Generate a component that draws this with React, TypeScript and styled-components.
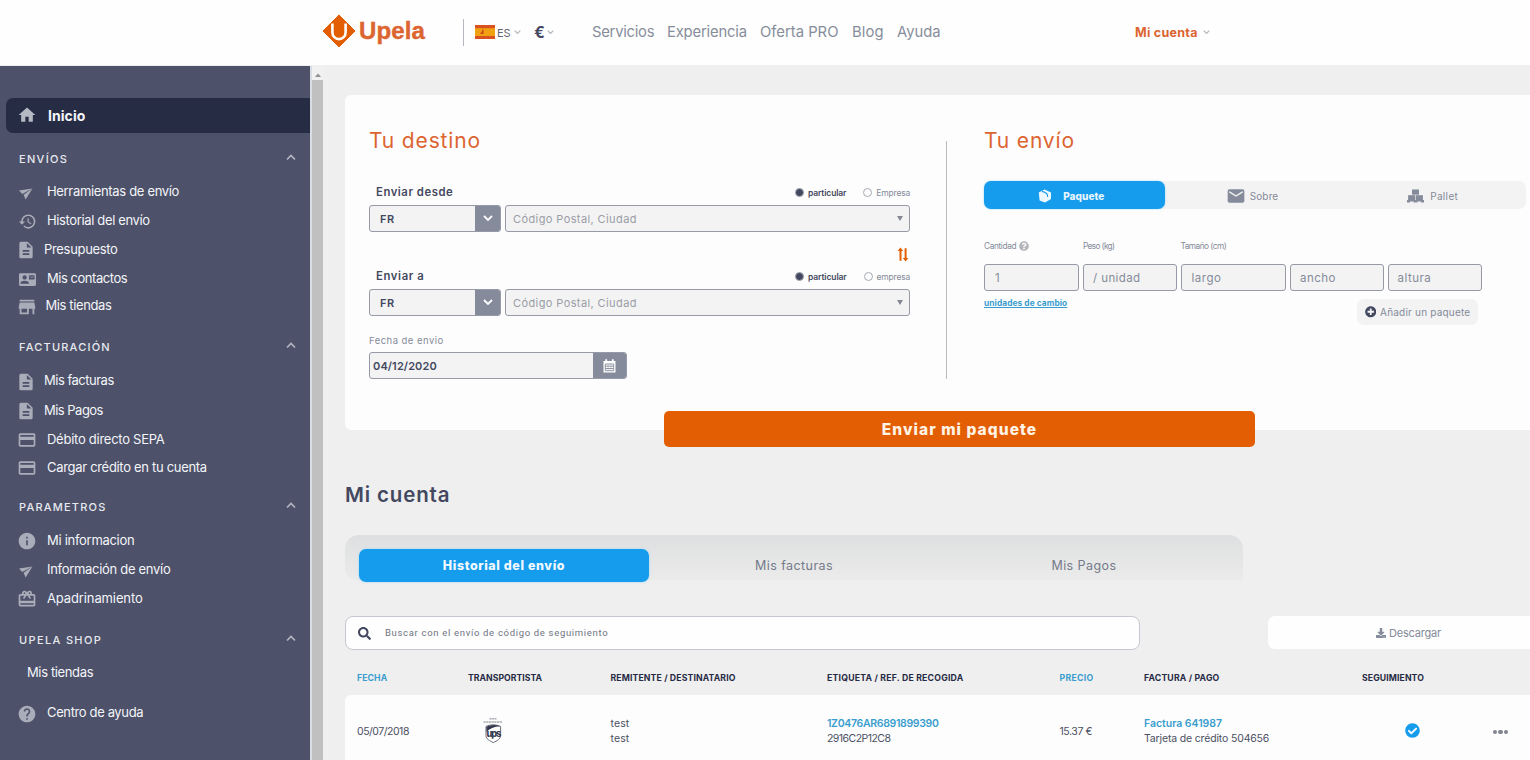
import React from 'react';
import styled, { createGlobalStyle, css } from 'styled-components';
import {
  MdHome, MdHistory, MdDescription, MdContactMail, MdStore, MdCreditCard,
  MdInfo, MdCardGiftcard, MdHelp, MdEmail,
} from 'react-icons/md';
import { FaSearch, FaDownload, FaCheckCircle, FaPlusCircle, FaQuestionCircle } from 'react-icons/fa';

const c = {
  side: '#4d5169',
  active: '#272c45',
  bg: '#efefef',
  orange: '#e35e02',
  title: '#dc6430',
  blue: '#159cec',
  link: '#3a9dce',
  navy: '#434860',
  gray: '#858b9a',
  field: '#f3f3f3',
};

const GlobalStyle = createGlobalStyle`
  * { box-sizing: border-box; }
  body {
    margin: 0;
    background: ${c.bg};
    font-family: Inter, "Open Sans", sans-serif;
    overflow: hidden;
  }
`;

type TextProps = { $s: number; $ls?: number; $w?: number; $c?: string };
const Text = styled.span<TextProps>`
  font-size: ${p => p.$s}px;
  letter-spacing: ${p => p.$ls ?? 0}px;
  font-weight: ${p => p.$w ?? 400};
  color: ${p => p.$c ?? 'inherit'};
  white-space: nowrap;
`;

const Page = styled.div`
  width: 1530px;
  height: 760px;
  overflow: hidden;
  display: flex;
  flex-direction: column;
`;

/* ---------- header ---------- */
const Header = styled.header`
  height: 66px;
  flex: none;
  background: #fefefe;
  border-bottom: 1px solid #f0f0f0;
  display: flex;
  align-items: center;
  padding-left: 322px;
`;
const Logo = styled.div`
  display: flex;
  align-items: center;
  width: 141px;
  height: 100%;
  padding-bottom: 3px;
`;
const LogoText = styled.span`
  font: bold 24px/30px "Liberation Sans", Arial, sans-serif;
  letter-spacing: 0.1px;
  color: ${c.title};
  -webkit-text-stroke: 0.4px ${c.title};
  margin-left: 3px;
`;
const Locale = styled.div`
  display: flex;
  align-items: center;
  height: 27px;
  width: 129px;
  margin-top: -1px;
  padding-left: 11px;
  border-left: 1px solid #b4b7bf;
  color: #5f6474;
`;
const Language = styled.div`
  display: flex;
  align-items: center;
  gap: 4px;
  margin-left: 2px;
  padding-top: 1px;
`;
const Currency = styled.div`
  display: flex;
  align-items: center;
  gap: 2px;
  margin-left: 13px;
`;
const Nav = styled.nav`
  display: flex;
  height: 20px;
  margin-top: -3px;
  align-items: center;
  color: #878d9b;
`;
const NavItem = styled.div<{ $w: number }>`
  width: ${p => p.$w}px;
`;
const Account = styled.div`
  display: flex;
  align-items: center;
  gap: 5px;
`;

const Chevron = ({ w = 7, color = '#b3b6bf', sw = 1.2, up = false }: { w?: number; color?: string; sw?: number; up?: boolean }) => (
  <svg width={w} height={w * 0.65} viewBox="0 0 10 6.5" fill="none" stroke={color} strokeWidth={(sw * 10) / w}>
    <path d={up ? 'M1 5.5 L5 1.5 L9 5.5' : 'M1 1 L5 5 L9 1'} />
  </svg>
);

const LogoMark = () => (
  <svg width="34" height="34" viewBox="0 0 34 34">
    <path d="M17 1 L33 17 L17 33 L1 17Z" fill={c.orange} stroke={c.orange} strokeLinejoin="round" />
    <path d="M10.4 9.5 V18.5 A6.6 6.6 0 0 0 23.6 18.5 V9.5" fill="none" stroke="#fff" strokeWidth="2.6" />
    <path d="M17 0.5 L23.5 8.5 H19.8 V19.5 A2.8 2.8 0 0 1 14.2 19.5 V8.5 H10.5Z" fill={c.orange} />
  </svg>
);

const Flag = () => (
  <svg width="20" height="14" viewBox="0 0 20 14">
    <rect width="20" height="14" fill="#d9511e" />
    <rect y="3.2" width="20" height="7.8" fill="#f0a010" />
    <path d="M6.8 5 L8.6 4.6 V9 H5.4 V8 L7 6.8Z" fill="#cf4a1c" />
  </svg>
);

/* ---------- sidebar ---------- */
const Body = styled.div`
  display: flex;
  flex: 1;
  min-height: 0;
`;
const Sidebar = styled.aside`
  width: 310px;
  flex: none;
  background: ${c.side};
  color: #f3f5f9;
  padding-top: 32px;
`;
const Home = styled.div`
  height: 35px;
  margin-left: 6px;
  padding: 0 0 1px 11px;
  border-radius: 7px 0 0 7px;
  background: ${c.active};
  display: flex;
  align-items: center;
  svg { color: #b4b9c4; margin-right: 11px; }
`;
const GroupTitle = styled.div<{ $mt: number; $mb: number }>`
  display: flex;
  align-items: center;
  justify-content: space-between;
  height: 20px;
  margin: ${p => p.$mt}px 14px ${p => p.$mb}px 19px;
  color: #e7e9ef;
  svg { margin-top: -3px; }
`;
const Item = styled.div<{ $h?: number; $x?: number }>`
  height: ${p => p.$h ?? 29}px;
  display: flex;
  align-items: center;
  padding-left: ${p => p.$x ?? 17}px;
`;
const IconBox = styled.span<{ $w: number; $y?: number }>`
  width: ${p => p.$w}px;
  height: 22px;
  display: flex;
  align-items: center;
  padding-top: ${p => p.$y ?? 4}px;
  color: #a9adba;
  flex: none;
`;

const SendIcon = () => (
  <svg width="17" height="14" viewBox="0 0 17 14" fill="currentColor">
    <path d="M2 3.4 L15.5 1.6 L5.2 6.9Z" />
    <path d="M15.5 1.6 L8.6 12.6 L6.6 7.8Z" />
  </svg>
);

type Entry = { t: string; ls: number; icon: React.ReactNode; w?: number; h?: number; x?: number; y?: number };
const doc = <MdDescription size={20} />;
const card = <MdCreditCard size={20} />;
const groups: { title: string; ls: number; mt: number; mb: number; items: Entry[] }[] = [
  {
    title: 'ENVÍOS', ls: 1.3, mt: 16, mb: 7, items: [
      { t: 'Herramientas de envío', ls: -0.33, icon: <SendIcon />, y: 6 },
      { t: 'Historial del envío', ls: -0.36, icon: <MdHistory size={19} />, w: 29, x: 18 },
      { t: 'Presupuesto', ls: -0.32, icon: doc, w: 28, x: 16, y: 3 },
      { t: 'Mis contactos', ls: -0.46, icon: <MdContactMail size={17} />, w: 28, x: 19 },
      { t: 'Mis tiendas', ls: -0.39, icon: <MdStore size={22} />, x: 15.5, h: 26 },
    ],
  },
  {
    title: 'FACTURACIÓN', ls: 1.2, mt: 19, mb: 8, items: [
      { t: 'Mis facturas', ls: -0.5, icon: doc, w: 28, x: 16, y: 3, h: 30 },
      { t: 'Mis Pagos', ls: -0.52, icon: doc, w: 28, x: 16, y: 3 },
      { t: 'Débito directo SEPA', ls: -0.26, icon: card, y: 3 },
      { t: 'Cargar crédito en tu cuenta', ls: -0.31, icon: card, y: 3, h: 27 },
    ],
  },
  {
    title: 'PARAMETROS', ls: 1.2, mt: 17, mb: 8, items: [
      { t: 'Mi informacion', ls: -0.29, icon: <MdInfo size={20} />, y: 3 },
      { t: 'Información de envío', ls: -0.3, icon: <SendIcon />, y: 6 },
      { t: 'Apadrinamiento', ls: -0.12, icon: <MdCardGiftcard size={20} />, y: 3 },
    ],
  },
];

/* ---------- scrollbar ---------- */
const Scrollbar = styled.div`
  width: 13px;
  flex: none;
  background: #f1f1f1;
  border-left: 2px solid #d9dde4;
  display: flex;
  flex-direction: column;
  align-items: center;
`;
const ScrollArrow = styled.div`
  height: 14px;
  padding-top: 5px;
  line-height: 0;
`;
const Thumb = styled.div`
  flex: 1;
  width: 100%;
  background: #c0c0c1;
`;

/* ---------- main ---------- */
const Main = styled.main`
  flex: 1;
  min-width: 0;
  padding: 29px 0 0 22px;
`;
const Card = styled.section`
  height: 335px;
  background: #fdfdfd;
  border-radius: 6px 0 0 6px;
  padding: 32px 0 0 24px;
  display: flex;
`;
const Destination = styled.div`
  width: 541px;
`;
const Divider = styled.div`
  width: 1px;
  height: 238px;
  margin: 14px 37px 0 36px;
  background: #b9bbc1;
`;
const Title = styled.h2`
  margin: 0;
  height: 27px;
  line-height: 28px;
  font-size: 21px;
  font-weight: 400;
  letter-spacing: 0.84px;
  color: ${c.title};
`;
const LabelRow = styled.div<{ $mt?: number }>`
  margin-top: ${p => p.$mt ?? 0}px;
  height: 20px;
  margin-bottom: 3px;
  padding-left: 7px;
  display: flex;
  align-items: center;
`;
const Radios = styled.div`
  display: flex;
  align-items: center;
  margin-left: auto;
  padding-top: 1px;
`;
const Radio = styled.span<{ $on?: boolean; $ml?: number }>`
  width: 9px;
  height: 9px;
  border-radius: 50%;
  margin-right: 4px;
  margin-left: ${p => p.$ml ?? 0}px;
  border: 1px solid #a6a9b2;
  ${p => p.$on && css`
    background: ${c.navy};
    border-color: #a3a6b1;
  `}
`;
const Row = styled.div`
  display: flex;
  gap: 4px;
`;
const Field = styled.div<{ $w: number; $pl?: number }>`
  width: ${p => p.$w}px;
  height: 27px;
  flex: none;
  border: 1px solid #959aa6;
  border-radius: 3px;
  background: ${c.field};
  padding-left: ${p => p.$pl ?? 7}px;
  display: flex;
  align-items: center;
  justify-content: space-between;
  color: ${c.gray};
  overflow: hidden;
`;
const Addon = styled.div<{ $w: number }>`
  width: ${p => p.$w}px;
  height: 100%;
  background: #858b9a;
  display: flex;
  align-items: center;
  justify-content: center;
`;
const Caret = styled.span`
  border: 3.5px solid transparent;
  border-top: 5px solid #858892;
  border-bottom: 0;
  margin-right: 6px;
`;
const Swap = styled.div`
  height: 34px;
  padding: 15px 1px 0 0;
  display: flex;
  justify-content: flex-end;
`;
const DateLabel = styled.div`
  margin-top: 14px;
  height: 20px;
  line-height: 16px;
  margin-bottom: 2px;
  color: ${c.gray};
`;

const Shipment = styled.div`
  width: 546px;
`;
const TypeTabs = styled.div`
  margin-top: 27px;
  width: 542px;
  height: 28px;
  border-radius: 7px;
  background: ${c.field};
  display: flex;
  color: ${c.gray};
`;
const TypeTab = styled.div<{ $on?: boolean; $gap: number }>`
  flex: 1;
  display: flex;
  align-items: center;
  justify-content: center;
  gap: ${p => p.$gap}px;
  border-radius: 7px;
  padding: 1px 6px 0 0;
  ${p => p.$on && css`
    background: ${c.blue};
    color: #e9f6ff;
    box-shadow: 0 0 2px #8fd0f7;
  `}
`;
const Measures = styled.div`
  display: grid;
  grid-template-columns: 95px 93.5px 105.5px 93.5px 94px;
  column-gap: 4px;
`;
const MeasureLabel = styled.div`
  margin-top: 27px;
  height: 20px;
  margin-bottom: 8px;
  display: flex;
  align-items: center;
  gap: 3px;
  color: ${c.gray};
  svg { color: #b4b6bc; }
`;
const Extras = styled.div`
  width: 494px;
  display: flex;
  justify-content: space-between;
  align-items: flex-start;
`;
const UnitLink = styled.a`
  margin-top: 5px;
  line-height: 14px;
  font-size: 8.3px;
  font-weight: 700;
  letter-spacing: 0.1px;
  color: ${c.link};
  text-decoration: underline;
`;
const AddButton = styled.div`
  margin-top: 8px;
  width: 121px;
  height: 26px;
  border-radius: 7px;
  background: ${c.field};
  display: flex;
  align-items: center;
  justify-content: center;
  gap: 4px;
  color: ${c.gray};
  svg { color: ${c.navy}; }
`;
const Submit = styled.div`
  position: relative;
  width: 591px;
  height: 36px;
  margin: -19px 0 0 319px;
  border-radius: 5px;
  background: ${c.orange};
  color: #fff3e6;
  display: flex;
  align-items: center;
  justify-content: center;
`;
const Heading = styled.h1`
  margin: 33px 0 0;
  height: 30px;
  line-height: 30px;
  font-size: 20.5px;
  font-weight: 600;
  letter-spacing: 0.85px;
  color: ${c.navy};
`;
const Tabs = styled.div`
  margin-top: 25px;
  width: 898px;
  height: 45px;
  padding: 14px 14px 0;
  border-radius: 14px 14px 0 12px;
  background: linear-gradient(#dedfe0, #ebebeb);
  display: flex;
  color: #747a89;
`;
const Tab = styled.div<{ $on?: boolean }>`
  width: 290px;
  height: 33px;
  flex: none;
  display: flex;
  align-items: center;
  justify-content: center;
  border-radius: 7px;
  ${p => p.$on && css`
    background: ${c.blue};
    color: #f1f9ff;
    box-shadow: 0 0 3px #a5d8f6;
  `}
`;
const Tools = styled.div`
  margin-top: 36px;
  display: flex;
  justify-content: space-between;
`;
const Search = styled.div`
  width: 795px;
  height: 34px;
  border: 1px solid #c6c8cf;
  border-radius: 8px;
  background: #fefefe;
  display: flex;
  align-items: center;
  padding-left: 12px;
  gap: 14px;
  color: ${c.navy};
`;
const SearchHint = styled.span`
  font: 400 9.5px/14px Roboto, sans-serif;
  letter-spacing: 0.68px;
  color: #6f7482;
`;
const Download = styled.div`
  width: 262px;
  height: 33px;
  border-radius: 7px 0 0 7px;
  background: #fefefe;
  display: flex;
  align-items: center;
  padding-left: 108px;
  gap: 3px;
  color: ${c.gray};
`;
const grid = css`
  display: grid;
  grid-template-columns: 111px 142.5px 216.5px 232.5px 84.5px 218px 131px 1fr;
  padding-left: 12px;
  align-items: center;
`;
const Head = styled.div`
  ${grid}
  height: 45px;
  padding-top: 11px;
  color: #272b45;
`;
const Line = styled.div`
  ${grid}
  height: 72px;
  border-radius: 6px 0 0 0;
  background: #fdfdfd;
  color: #4b5063;
`;
const Cell = styled.div<{ $pl?: number; $pb?: number }>`
  display: flex;
  flex-direction: column;
  align-items: flex-start;
  line-height: 15px;
  padding-left: ${p => p.$pl ?? 0}px;
  padding-bottom: ${p => p.$pb ?? 0}px;
`;
const Dots = styled.div`
  display: flex;
  gap: 1px;
  padding-top: 2px;
  i { width: 4.4px; height: 4.4px; border-radius: 50%; background: #81858f; }
`;

const BoxIcon = () => (
  <svg width="14" height="14" viewBox="0 0 14 14">
    <path d="M0.8 3.6 L6.6 0.6 L13 3.4 V10 L7 13.4 L1.6 11.4Z" fill="#eef8ff" />
    <path d="M4 2.4 C8 3.2 10 5 9.6 8" stroke={c.blue} strokeWidth="1.1" fill="none" />
  </svg>
);
const PalletIcon = () => (
  <svg width="17" height="14" viewBox="0 0 17 14" fill="#858b9a">
    <rect x="5" y="0.5" width="7" height="5.2" />
    <rect x="1.1" y="6.2" width="7.1" height="5.2" />
    <rect x="8.8" y="6.2" width="7.1" height="5.2" />
    <path d="M0 11 H17 V13.5 H14 V12.6 H10.4 V13.5 H6.6 V12.6 H3 V13.5 H0Z" />
  </svg>
);
const CalendarIcon = () => (
  <svg width="13" height="14" viewBox="0 0 13 14">
    <path d="M0.5 2 H12.5 V13.5 H0.5Z M2.3 0.3 H4.1 V3 H2.3Z M8.9 0.3 H10.7 V3 H8.9Z" fill="#fff" />
    <path d="M2.3 5 H10.7 V11.7 H2.3Z M2.3 7.2 H10.7 M2.3 9.5 H10.7" stroke="#858b9a" strokeWidth="0.9" fill="none" />
    <path d="M5.1 5 V11.7 M7.9 5 V11.7" stroke="#858b9a" strokeWidth="0.4" fill="none" />
  </svg>
);
const SwapIcon = () => (
  <svg width="12" height="15" viewBox="0 0 12 15" fill={c.orange}>
    <path d="M3.4 0.5 L6.2 4 H4.5 V13.8 H2.5 V4 H0.6Z" />
    <path d="M8.6 14.5 L5.8 11 H7.6 V1.2 H9.6 V11 H11.4Z" />
  </svg>
);
const UpsShield = styled.div`
  width: 20px;
  margin-left: 15px;
  line-height: 0;
`;
const UpsLogo = () => (
  <UpsShield>
    <svg width="20" height="28" viewBox="0 0 20 28">
      <path d="M6.5 1.8 H13.5 M0.5 5 H19.5" stroke="#a9acb4" strokeWidth="1.6" strokeDasharray="2.2 0.5" />
      <path d="M3 9.4 Q10 6.2 17.6 9.4 V18.5 C17.6 22 14 23.8 10.3 25.6 C6.6 23.8 3 22 3 18.5Z" fill="#fff" stroke="#686c78" strokeWidth="1" />
      <path d="M3.4 9.7 Q9.6 6.7 17.2 9.2 Q8 9.6 3.4 15Z" fill="#343950" />
      <text x="3.4" y="20.4" fontFamily="Inter" fontSize="9.2" fontWeight="800" letterSpacing="-1" fill="#343950">ups</text>
    </svg>
  </UpsShield>
);

type AddressProps = { label: string; ls: number; other: string; gap: number; mt?: number };
const Address = ({ label, ls, other, gap, mt }: AddressProps) => (
  <>
    <LabelRow $mt={mt}>
      <Text $s={11.3} $w={600} $ls={ls} $c={c.navy}>{label}</Text>
      <Radios>
        <Radio $on />
        <Text $s={8.5} $w={600} $ls={-0.12} $c={c.navy}>particular</Text>
        <Radio $ml={gap} />
        <Text $s={8.5} $ls={-0.2} $c={c.gray}>{other}</Text>
      </Radios>
    </LabelRow>
    <Row>
      <Field $w={132} $pl={10}>
        <Text $s={11} $w={600} $ls={0.5} $c={c.navy}>FR</Text>
        <Addon $w={25}><Chevron w={10} sw={1.8} color="#fff" /></Addon>
      </Field>
      <Field $w={405}>
        <Text $s={11} $ls={0.4} $c="#9a9da6">Código Postal, Ciudad</Text>
        <Caret />
      </Field>
    </Row>
  </>
);

export default function App() {
  return (
    <Page>
      <GlobalStyle />
      <Header>
        <Logo><LogoMark /><LogoText>Upela</LogoText></Logo>
        <Locale>
          <Flag />
          <Language><Text $s={11} $ls={-0.2}>ES</Text><Chevron /></Language>
          <Currency><Text $s={15.5} $w={700} $c={c.navy}>€</Text><Chevron /></Currency>
        </Locale>
        <Nav>
          <NavItem $w={75}><Text $s={14.8} $ls={-0.26}>Servicios</Text></NavItem>
          <NavItem $w={93}><Text $s={14.8} $ls={-0.18}>Experiencia</Text></NavItem>
          <NavItem $w={92}><Text $s={14.8}>Oferta PRO</Text></NavItem>
          <NavItem $w={45}><Text $s={14.8} $ls={0.1}>Blog</Text></NavItem>
          <NavItem $w={238}><Text $s={14.8}>Ayuda</Text></NavItem>
        </Nav>
        <Account>
          <Text $s={12.5} $w={700} $ls={0.28} $c={c.title}>Mi cuenta</Text>
          <Chevron />
        </Account>
      </Header>
      <Body>
        <Sidebar>
          <Home><MdHome size={20} /><Text $s={14} $w={700} $ls={0.05}>Inicio</Text></Home>
          {groups.map(g => (
            <React.Fragment key={g.title}>
              <GroupTitle $mt={g.mt} $mb={g.mb}>
                <Text $s={11} $w={500} $ls={g.ls}>{g.title}</Text>
                <Chevron w={10} sw={1.7} up />
              </GroupTitle>
              {g.items.map(i => (
                <Item key={i.t} $h={i.h} $x={i.x}>
                  <IconBox $w={i.w ?? 30} $y={i.y}>{i.icon}</IconBox>
                  <Text $s={13} $ls={i.ls}>{i.t}</Text>
                </Item>
              ))}
            </React.Fragment>
          ))}
          <GroupTitle $mt={18} $mb={7}>
            <Text $s={11} $w={500} $ls={1.35}>UPELA SHOP</Text>
            <Chevron w={10} sw={1.7} up />
          </GroupTitle>
          <Item $x={27}><Text $s={13} $ls={-0.37}>Mis tiendas</Text></Item>
          <Item $h={52}>
            <IconBox $w={30} $y={3}><MdHelp size={20} /></IconBox>
            <Text $s={13} $ls={-0.37}>Centro de ayuda</Text>
          </Item>
        </Sidebar>
        <Scrollbar>
          <ScrollArrow><svg width="6" height="4"><path d="M0 4 L3 0.5 L6 4Z" fill="#8f9094" /></svg></ScrollArrow>
          <Thumb />
        </Scrollbar>
        <Main>
          <Card>
            <Destination>
              <Title>Tu destino</Title>
              <Address mt={28} label="Enviar desde" ls={0.55} other="Empresa" gap={17} />
              <Swap><SwapIcon /></Swap>
              <Address label="Enviar a" ls={0.62} other="empresa" gap={17} />
              <DateLabel><Text $s={9.5} $ls={0.46}>Fecha de envio</Text></DateLabel>
              <Field $w={258} $pl={3}>
                <Text $s={11} $w={600} $ls={0.12} $c={c.navy}>04/12/2020</Text>
                <Addon $w={33}><CalendarIcon /></Addon>
              </Field>
            </Destination>
            <Divider />
            <Shipment>
              <Title>Tu envío</Title>
              <TypeTabs>
                <TypeTab $on $gap={11}><BoxIcon /><Text $s={10} $w={800} $ls={0.08}>Paquete</Text></TypeTab>
                <TypeTab $gap={4}><MdEmail size={20} /><Text $s={10} $ls={0.15}>Sobre</Text></TypeTab>
                <TypeTab $gap={6}><PalletIcon /><Text $s={10} $ls={0.35}>Pallet</Text></TypeTab>
              </TypeTabs>
              <Measures>
                <MeasureLabel><Text $s={8.3} $ls={-0.37}>Cantidad</Text><FaQuestionCircle size={10} /></MeasureLabel>
                <MeasureLabel><Text $s={8.3} $ls={-0.65}>Peso (kg)</Text></MeasureLabel>
                <MeasureLabel><Text $s={8.3} $ls={-0.53}>Tamaño (cm)</Text></MeasureLabel>
                <span /><span />
                <Field $w={95} $pl={10}><Text $s={11.5}>1</Text></Field>
                <Field $w={93.5} $pl={9}><Text $s={11.5} $ls={0.4}>/ unidad</Text></Field>
                <Field $w={105.5} $pl={10}><Text $s={11.5} $ls={0.5}>largo</Text></Field>
                <Field $w={93.5} $pl={9}><Text $s={11.5} $ls={0.5}>ancho</Text></Field>
                <Field $w={94} $pl={9}><Text $s={11.5} $ls={0.5}>altura</Text></Field>
              </Measures>
              <Extras>
                <UnitLink>unidades de cambio</UnitLink>
                <AddButton><FaPlusCircle size={11.5} /><Text $s={10} $ls={0.2}>Añadir un paquete</Text></AddButton>
              </Extras>
            </Shipment>
          </Card>
          <Submit><Text $s={15.5} $w={800} $ls={1.06}>Enviar mi paquete</Text></Submit>
          <Heading>Mi cuenta</Heading>
          <Tabs>
            <Tab $on><Text $s={12.5} $w={800} $ls={0.6}>Historial del envío</Text></Tab>
            <Tab><Text $s={12.5} $ls={0.44}>Mis facturas</Text></Tab>
            <Tab><Text $s={12.5} $ls={0.44}>Mis Pagos</Text></Tab>
          </Tabs>
          <Tools>
            <Search><FaSearch size={13} /><SearchHint>Buscar con el envío de código de seguimiento</SearchHint></Search>
            <Download><FaDownload size={10} /><Text $s={11} $ls={-0.2}>Descargar</Text></Download>
          </Tools>
          <Head>
            <Text $s={8.7} $w={700} $ls={0.1} $c={c.link}>FECHA</Text>
            <Text $s={8.7} $w={700} $ls={0.02}>TRANSPORTISTA</Text>
            <Text $s={8.7} $w={700} $ls={0.13}>REMITENTE / DESTINATARIO</Text>
            <Text $s={8.7} $w={700} $ls={0.22}>ETIQUETA / REF. DE RECOGIDA</Text>
            <Text $s={8.7} $w={700} $ls={0.3} $c={c.link}>PRECIO</Text>
            <Text $s={8.7} $w={700} $ls={0.18}>FACTURA / PAGO</Text>
            <Text $s={8.7} $w={700} $ls={0.1}>SEGUIMIENTO</Text>
          </Head>
          <Line>
            <Cell><Text $s={10.5} $ls={-0.48}>05/07/2018</Text></Cell>
            <Cell><UpsLogo /></Cell>
            <Cell><Text $s={10.5} $ls={0.1}>test</Text><Text $s={10.5} $ls={0.1}>test</Text></Cell>
            <Cell>
              <Text $s={10.5} $w={600} $ls={-0.32} $c={c.link}>1Z0476AR6891899390</Text>
              <Text $s={10.5} $ls={-0.54}>2916C2P12C8</Text>
            </Cell>
            <Cell><Text $s={10.5} $ls={-0.42}>15.37 €</Text></Cell>
            <Cell>
              <Text $s={10.5} $w={600} $ls={-0.02} $c={c.link}>Factura 641987</Text>
              <Text $s={10.5} $ls={-0.16}>Tarjeta de crédito 504656</Text>
            </Cell>
            <Cell $pl={43} $pb={2}><FaCheckCircle size={15} color={c.blue} /></Cell>
            <Dots><i /><i /><i /></Dots>
          </Line>
        </Main>
      </Body>
    </Page>
  );
}
